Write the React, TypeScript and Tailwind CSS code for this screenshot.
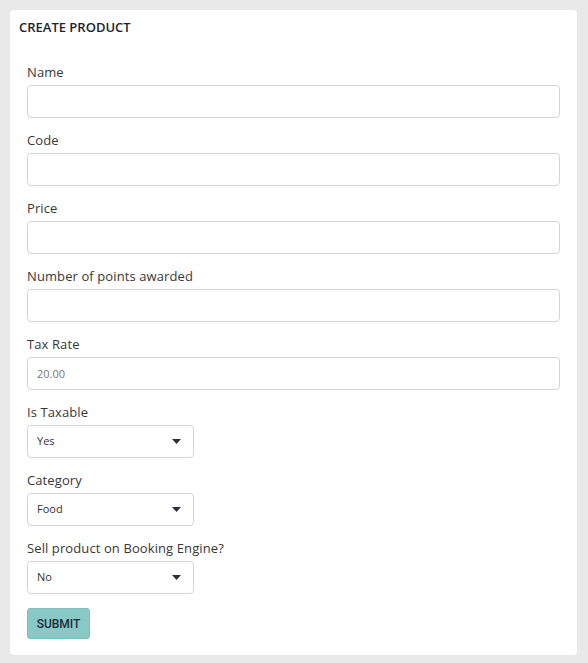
const font = { fontFamily: '"Open Sans", "Noto Sans", sans-serif' };

function Field({ label, children }: { label: string; children: React.ReactNode }) {
    return (
        <div className="mb-[12px]">
            <label className="block text-[13px] leading-[20px] text-[#383838] mb-[3px] tracking-[0.1px]">{label}</label>
            {children}
        </div>
    );
}

function TextInput({ value }: { value?: string }) {
    return (
        <input
            type="text"
            defaultValue={value}
            className="block w-full h-[33px] px-[9px] border border-[#d4d4d4] rounded-[4px] bg-white text-[11px] text-[#777] outline-none"
        />
    );
}

function SelectInput({ options }: { options: string[] }) {
    return (
        <div className="relative w-[167px]">
            <select className="block w-full h-[33px] pl-[9px] pr-6 border border-[#d4d4d4] rounded-[4px] bg-white text-[11px] text-[#333] appearance-none outline-none">
                {options.map(o => (
                    <option key={o} value={o}>{o}</option>
                ))}
            </select>
            <svg className="absolute right-[13px] top-[14px] pointer-events-none" width="9" height="5" viewBox="0 0 9 5">
                <path d="M0 0 H9 L4.5 5 Z" fill="#2b2f3a" />
            </svg>
        </div>
    );
}

export default function App() {
    return (
        <div className="min-h-screen bg-[#e9e9e9] pt-[10px] pl-[10px] pr-[11px] pb-[9px]" style={font}>
            <div className="bg-white rounded-[4px] pt-[7px] pb-[16px]">
                <h1 className="pl-[9px] text-[13px] leading-[20px] font-semibold text-[#1c2434]">CREATE PRODUCT</h1>
                <form className="px-[17px] mt-[25px]" onSubmit={e => e.preventDefault()}>
                    <Field label="Name"><TextInput /></Field>
                    <Field label="Code"><TextInput /></Field>
                    <Field label="Price"><TextInput /></Field>
                    <Field label="Number of points awarded"><TextInput /></Field>
                    <Field label="Tax Rate"><TextInput value="20.00" /></Field>
                    <Field label="Is Taxable"><SelectInput options={['Yes', 'No']} /></Field>
                    <Field label="Category"><SelectInput options={['Food', 'Drink']} /></Field>
                    <Field label="Sell product on Booking Engine?"><SelectInput options={['No', 'Yes']} /></Field>
                    <button
                        type="submit"
                        className="mt-[2px] w-[63px] h-[31px] rounded-[3px] border border-[#7dbfbb] bg-[#88c9c6] text-[12px] font-medium text-[#1e2a3a]"
                        style={{ fontFamily: 'Roboto, Arial, sans-serif' }}
                    >
                        SUBMIT
                    </button>
                </form>
            </div>
        </div>
    );
}
